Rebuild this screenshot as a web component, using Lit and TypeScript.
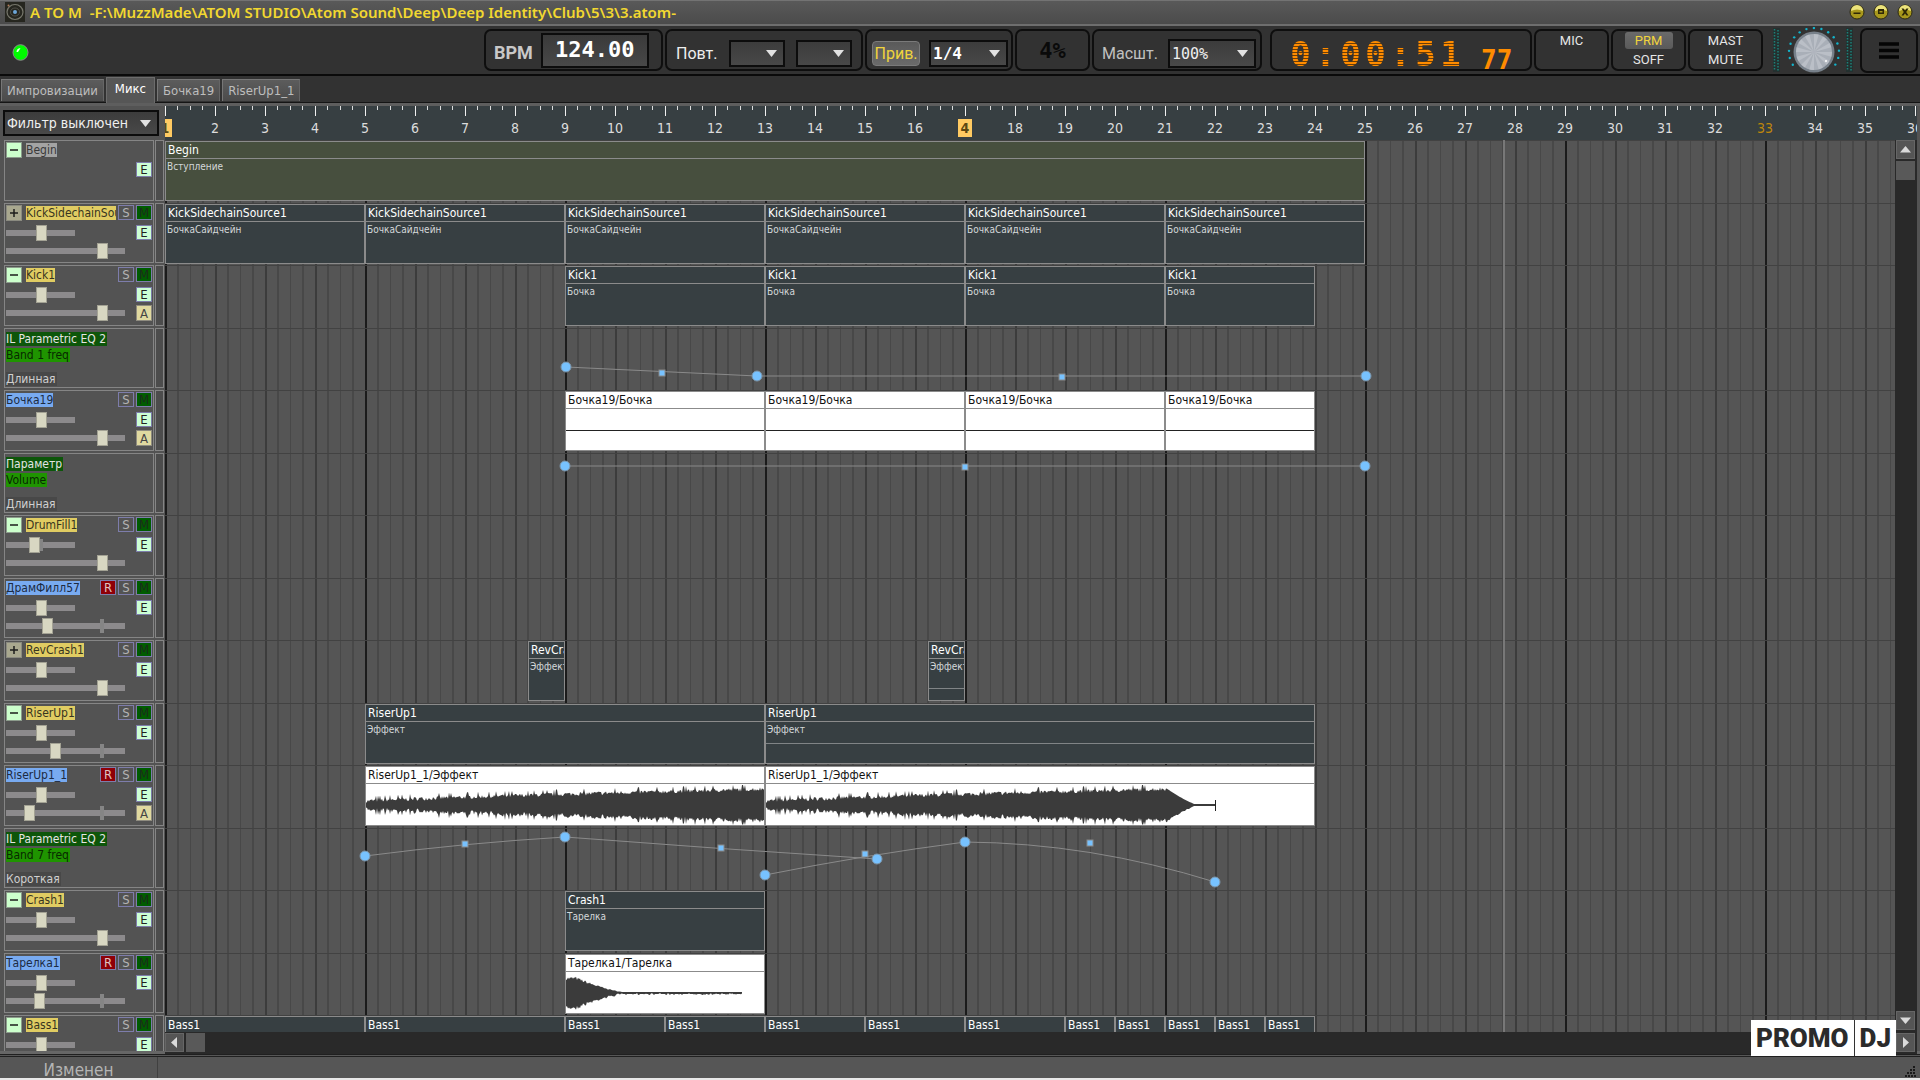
import { LitElement, html, css, svg, nothing } from "lit";
import { customElement, property } from "lit/decorators.js";
import { classMap } from "lit/directives/class-map.js";

const BAR = 50;
const LAST_BAR = 36;

type Tone = "olive" | "slate" | "white";

interface Clip {
  from: number;
  to: number;
  title: string;
  sub?: string;
  tone?: Tone;
  line?: number;
  wave?: "riser" | "tail" | "crash";
}

interface Curve {
  path: string;
  points: [number, number][];
  handles: [number, number][];
}

interface Track {
  kind: "group" | "audio" | "param";
  name: string;
  open?: boolean;
  rec?: boolean;
  auto?: boolean;
  pan?: number;
  vol?: number;
  param?: string;
  mode?: string;
  plain?: boolean;
  clips?: Clip[];
  curve?: Curve;
}

const run = (starts: number[], end: number, rest: Omit<Clip, "from" | "to">): Clip[] =>
  starts.map((from, i) => ({ from, to: starts[i + 1] ?? end, ...rest }));

const TRACKS: Track[] = [
  {
    kind: "group", name: "Begin", open: true, plain: true,
    clips: [{ from: 1, to: 25, title: "Begin", sub: "Вступление", tone: "olive" }],
  },
  {
    kind: "group", name: "KickSidechainSource1", vol: 91,
    clips: run([1, 5, 9, 13, 17, 21], 25, { title: "KickSidechainSource1", sub: "БочкаСайдчейн" }),
  },
  {
    kind: "group", name: "Kick1", open: true, auto: true, vol: 91,
    clips: run([9, 13, 17, 21], 24, { title: "Kick1", sub: "Бочка" }),
  },
  {
    kind: "param", name: "IL Parametric EQ 2", param: "Band 1 freq", mode: "Длинная",
    curve: {
      path: "M401 39 L592 48 H1201",
      points: [[401, 39], [592, 48], [1201, 48]],
      handles: [[497, 45], [897, 49]],
    },
  },
  {
    kind: "audio", name: "Бочка19", auto: true, vol: 91,
    clips: run([9, 13, 17, 21], 24, { title: "Бочка19/Бочка", tone: "white", line: 38 }),
  },
  {
    kind: "param", name: "Параметр", param: "Volume", mode: "Длинная",
    curve: {
      path: "M400 13 H1200",
      points: [[400, 13], [1200, 13]],
      handles: [[800, 14]],
    },
  },
  { kind: "group", name: "DrumFill1", open: true, pan: 23, vol: 91 },
  { kind: "audio", name: "ДрамФилл57", rec: true, vol: 36 },
  {
    kind: "group", name: "RevCrash1", vol: 91,
    clips: [
      { from: 8.25, to: 9, title: "RevCrash1", sub: "Эффект" },
      { from: 16.25, to: 17, title: "RevCrash1", sub: "Эффект", line: 46 },
    ],
  },
  {
    kind: "group", name: "RiserUp1", open: true, vol: 44,
    clips: [
      { from: 5, to: 13, title: "RiserUp1", sub: "Эффект" },
      { from: 13, to: 24, title: "RiserUp1", sub: "Эффект", line: 38 },
    ],
  },
  {
    kind: "audio", name: "RiserUp1_1", rec: true, auto: true, vol: 18,
    clips: [
      { from: 5, to: 13, title: "RiserUp1_1/Эффект", tone: "white", wave: "riser" },
      { from: 13, to: 24, title: "RiserUp1_1/Эффект", tone: "white", wave: "tail" },
    ],
  },
  {
    kind: "param", name: "IL Parametric EQ 2", param: "Band 7 freq", mode: "Короткая",
    curve: {
      path: "M200 28 Q300 15 400 9 Q556 21 712 31 M600 47 Q700 27 800 14 Q925 15 1050 54",
      points: [[200, 28], [400, 9], [712, 31], [600, 47], [800, 14], [1050, 54]],
      handles: [[300, 16], [556, 20], [700, 26], [925, 15]],
    },
  },
  {
    kind: "group", name: "Crash1", open: true, vol: 91,
    clips: [{ from: 9, to: 13, title: "Crash1", sub: "Тарелка" }],
  },
  {
    kind: "audio", name: "Тарелка1", rec: true, vol: 28,
    clips: [{ from: 9, to: 13, title: "Тарелка1/Тарелка", tone: "white", wave: "crash" }],
  },
  {
    kind: "group", name: "Bass1", open: true, vol: 91,
    clips: run([1, 5, 9, 11, 13, 15, 17, 19, 20, 21, 22, 23], 24, { title: "Bass1" }),
  },
];

/* Outline of a waveform, mirrored around y = 21. */
function wavePath(kind: "riser" | "tail" | "crash"): string {
  let seed = 7;
  const rnd = () => (seed = (seed * 16807) % 2147483647) / 2147483647;
  const mid = 21;
  const end = kind === "riser" ? 400 : kind === "tail" ? 449 : 176;
  const up: string[] = [];
  const down: string[] = [];
  for (let x = 0; x <= end; x += 1) {
    const r = rnd();
    const r2 = rnd();
    let a: number;
    if (kind === "crash") {
      a = x < 10 ? 15 : x < 60 ? 15 * Math.pow(1 - (x - 10) / 55, 1.5) : 1;
      a = Math.max(1, a * (0.85 + r * 0.25));
    } else {
      const t = Math.min(x, 400) / 400;
      a = 5 + 12 * Math.pow(t, 0.8);
      if (x > 400) a = x < 430 ? Math.max(1, 17 * Math.pow(1 - (x - 400) / 32, 1.3)) : 1;
      const spike = r > 0.9 ? 3 : 0;
      if (x <= 400) a = Math.min(20, a - 3 + r * 4 + spike);
    }
    const b = a > 1 ? Math.min(20, a - 1 + r2 * 2) : 1;
    up.push(`${x} ${(mid - a).toFixed(1)}`);
    down.unshift(`${x} ${(mid + b).toFixed(1)}`);
  }
  return `M${up.join("L")}L${down.join("L")}Z`;
}

const UI_FONT = css`"DejaVu Sans Condensed", "Noto Sans", sans-serif`;

@customElement("drop-down")
class DropDown extends LitElement {
  @property() label = "";
  @property() value = "";

  static styles = css`
    :host {
      display: grid;
      align-items: center;
      box-sizing: border-box;
      border: 2px solid #0c0c0c;
      background: linear-gradient(#3c3c3c, #484848);
    }
    .field {
      grid-area: 1 / 1;
      width: 100%;
      height: 100%;
      box-sizing: border-box;
      appearance: none;
      border: 0;
      padding: 0 20px 0 2px;
      background: transparent;
      color: inherit;
      font: inherit;
      outline: none;
    }
    .arrow {
      grid-area: 1 / 1;
      justify-self: end;
      margin-right: 6px;
      pointer-events: none;
    }
  `;

  render() {
    return html`
      <select class="field" aria-label=${this.label}>
        <option>${this.value}</option>
      </select>
      <svg class="arrow" width="11" height="7" viewBox="0 0 11 7" aria-hidden="true">
        <path d="M0 0H11L5.500 7Z" fill="#e2e2e2" />
      </svg>
    `;
  }
}

@customElement("track-panel")
class TrackPanel extends LitElement {
  @property({ attribute: false }) track!: Track;

  static styles = css`
    :host {
      display: flex;
      gap: 1px;
      padding-bottom: 2px;
      box-sizing: border-box;
      font: 12px/14px ${UI_FONT};
    }
    .box {
      display: flex;
      flex-direction: column;
      flex: 1;
      min-width: 0;
      box-sizing: border-box;
      padding: 1px 1px 0;
      border: 1px solid #858585;
      background: #535353;
    }
    .meter {
      width: 9px;
      box-sizing: border-box;
      border: 1px solid #858585;
      background: #4c4c4c;
    }
    .line {
      display: flex;
      align-items: flex-start;
      justify-content: flex-end;
      gap: 2px;
      height: 16px;
    }
    .head {
      margin-bottom: 4px;
    }
    .mid {
      margin-bottom: 2px;
    }
    .name {
      height: 14px;
      margin: 1px auto 0 0;
      overflow: hidden;
      white-space: nowrap;
      background: #e0cc62;
      color: #38351f;
    }
    .toggle + .name {
      margin-left: 2px;
    }
    .audio {
      background: #78aaf0;
      color: #1c2b42;
    }
    .toggle + .grey {
      background: #a3a3a3;
      color: #3a3a3a;
    }
    .btn {
      flex: none;
      width: 16px;
      height: 15px;
      box-sizing: border-box;
      padding: 0;
      border: 1px solid #7d7dab;
      background: #535353;
      color: #b4b4b4;
      font: 13px/13px ${UI_FONT};
      text-align: center;
    }
    .toggle {
      height: 16px;
      border-color: #8c9c8c;
      background: #ccffcc;
      display: grid;
      place-items: center;
    }
    .closed {
      background: #a9a88f;
      border-color: #8a8a80;
    }
    .mute {
      background: #005c00;
      color: #1c2c1c;
    }
    .rec {
      background: #8e0008;
      color: #e0c0c0;
    }
    .edit {
      background: #ccffd4;
      color: #222;
    }
    .auto {
      height: 16px;
      background: #e0d9a0;
      border-color: #8f8c80;
      color: #444;
    }
    .slider {
      flex: none;
      appearance: none;
      width: 119px;
      height: 16px;
      margin: 0 auto 0 0;
      background:
        linear-gradient(#858585, #858585) 94px 1px / 4px 14px no-repeat,
        linear-gradient(#8c8a8c, #8c8a8c) 0 5px / 100% 6px no-repeat;
    }
    .short {
      width: 69px;
      background:
        linear-gradient(#858585, #858585) 33px 2px / 4px 12px no-repeat,
        linear-gradient(#8c8a8c, #8c8a8c) 0 5px / 100% 6px no-repeat;
    }
    .slider::-webkit-slider-thumb {
      appearance: none;
      width: 11px;
      height: 16px;
      box-sizing: border-box;
      border: 1px solid #a3a294;
      background: #d8d7c2;
    }
    .params {
      display: flex;
      flex-direction: column;
      align-items: flex-start;
      padding: 2px 0 0;
      gap: 2px;
    }
    .plugin {
      background: #0d560a;
      color: #e4e4e4;
    }
    .value {
      background: #1f9400;
      color: #082a00;
    }
    .mode {
      margin-top: 8px;
      background: #484848;
      color: #d0d0d0;
    }
    .plugin,
    .value,
    .mode {
      white-space: nowrap;
      padding-right: 1px;
    }
  `;

  render() {
    const t = this.track;
    return html`
      <div class="box">${t.kind === "param" ? this.params(t) : this.controls(t)}</div>
      <div class="meter"></div>
    `;
  }

  private params(t: Track) {
    return html`<div class="params">
      <span class="plugin">${t.name}</span>
      <span class="value">${t.param}</span>
      <span class="mode">${t.mode}</span>
    </div>`;
  }

  private controls(t: Track) {
    return html`
      <div class="line head">
        ${t.kind === "group"
          ? html`<button class=${classMap({ btn: true, toggle: true, closed: !t.open })}
              aria-label=${t.open ? "Свернуть" : "Развернуть"}>
              <svg width="10" height="10" viewBox="0 0 10 10" aria-hidden="true">
                <path d=${t.open ? "M1 5H9" : "M1 5H9M5 1V9"} stroke="#1c1c1c" stroke-width="1.500" />
              </svg>
            </button>`
          : nothing}
        <span class=${classMap({ name: true, audio: t.kind === "audio", grey: !!t.plain })}>${t.name}</span>
        ${t.rec ? html`<button class="btn rec">R</button>` : nothing}
        ${t.plain ? nothing : html`<button class="btn">S</button><button class="btn mute">M</button>`}
      </div>
      <div class="line mid">
        ${t.plain
          ? nothing
          : html`<input class="slider short" type="range" aria-label="Панорама" min="0" max="58" .value=${String(t.pan ?? 30)} />`}
        <button class="btn edit">E</button>
      </div>
      <div class="line">
        ${t.plain
          ? nothing
          : html`<input class="slider" type="range" aria-label="Громкость" min="0" max="108" .value=${String(t.vol ?? 91)} />`}
        ${t.auto ? html`<button class="btn auto">A</button>` : nothing}
      </div>
    `;
  }
}

@customElement("track-lane")
class TrackLane extends LitElement {
  @property({ attribute: false }) track!: Track;

  static styles = css`
    :host {
      display: block;
      position: relative;
      box-sizing: border-box;
      border-top: 1px solid #424242;
      font: 12px/16px ${UI_FONT};
    }
    .clip {
      position: absolute;
      top: 0;
      height: 60px;
      box-sizing: border-box;
      overflow: hidden;
      border: 1px solid #8b8b8b;
      background: #373f42;
      color: #fff;
      white-space: nowrap;
    }
    .title {
      height: 16px;
      padding-left: 2px;
      border-bottom: 1px solid #8b8b8b;
    }
    .sub {
      padding-left: 1px;
      font-size: 10px;
      color: #d4d8da;
    }
    .olive {
      background: #474f3e;
    }
    .white {
      background: #fff;
      color: #111;
    }
    .rule {
      position: absolute;
      left: 0;
      right: 0;
      height: 1px;
      background: #808486;
    }
    .white .rule {
      background: #222;
    }
    .wave {
      display: block;
    }
    .curve {
      position: absolute;
      left: 0;
      top: -1px;
      overflow: visible;
    }
  `;

  render() {
    const t = this.track;
    return html`
      ${(t.clips ?? []).map((c) => {
        const left = Math.round((c.from - 1) * BAR);
        const right = Math.round((c.to - 1) * BAR);
        return html`<div class="clip ${c.tone ?? "slate"}" style="left:${left}px;width:${right - left}px">
          <div class="title">${c.title}</div>
          ${c.sub ? html`<div class="sub">${c.sub}</div>` : nothing}
          ${c.line ? html`<div class="rule" style="top:${c.line}px"></div>` : nothing}
          ${c.wave ? this.wave(c.wave) : nothing}
        </div>`;
      })}
      ${t.curve ? this.curve(t.curve) : nothing}
    `;
  }

  private wave(kind: "riser" | "tail" | "crash") {
    return html`<svg class="wave" width="460" height="42" viewBox="0 0 460 42" aria-hidden="true">
      <path d=${wavePath(kind)} fill="#3b3b3b" />
      ${kind === "tail" ? svg`<path d="M449.500 16V27" stroke="#222" />` : nothing}
    </svg>`;
  }

  private curve(c: Curve) {
    return html`<svg class="curve" width="1300" height="60" viewBox="0 0 1300 60" aria-hidden="true">
      <path d=${c.path} fill="none" stroke="#8a8a8a" />
      ${c.handles.map(([x, y]) => svg`<rect x=${x - 3} y=${y - 3} width="6" height="6" fill="#77c2ff" stroke="#8a8a8a" />`)}
      ${c.points.map(([x, y]) => svg`<circle cx=${x} cy=${y} r="5" fill="#77c2ff" stroke="#7c94a8" />`)}
    </svg>`;
  }
}

@customElement("app-root")
class AppRoot extends LitElement {
  static styles = css`
    :host {
      display: flex;
      flex-direction: column;
      height: 100vh;
      overflow: hidden;
      background: #535353;
      color: #ddd;
      font: 14px/18px ${UI_FONT};
    }
    button {
      font: inherit;
      color: inherit;
      cursor: default;
    }
    .titlebar {
      display: flex;
      align-items: center;
      gap: 5px;
      height: 26px;
      flex: none;
      box-sizing: border-box;
      padding: 0 7px 2px 5px;
      border-top: 1px solid #737373;
      border-bottom: 2px solid #6e6e6e;
      background: linear-gradient(#595959, #4b4b4b);
    }
    .title {
      flex: 1;
      margin: 0;
      font: 600 15px/20px "Noto Sans", "Open Sans", sans-serif;
      color: #f2d830;
      white-space: pre;
    }
    .winbtns {
      display: flex;
      gap: 8px;
    }
    .winbtn {
      width: 16px;
      height: 16px;
      padding: 0;
      border: 0;
      background: none;
      display: block;
    }
    .toolbar {
      display: flex;
      align-items: center;
      gap: 2px;
      height: 50px;
      flex: none;
      box-sizing: border-box;
      padding: 0 2px 0 12px;
      border-bottom: 2px solid #0a0a0a;
      background: #323232;
      font: 16px/20px Roboto, "Noto Sans", sans-serif;
    }
    .led {
      margin-right: auto;
    }
    .group {
      display: flex;
      align-items: center;
      height: 42px;
      box-sizing: border-box;
      border: 2px solid #0e0e0e;
      border-radius: 7px;
      background: #323232;
    }
    .bpm {
      width: 179px;
      gap: 8px;
      padding-left: 8px;
      font-size: 18px;
      font-weight: bold;
      color: #c8c8c8;
    }
    .bpm-label {
      padding-top: 5px;
    }
    .bpm-field {
      width: 108px;
      height: 35px;
      box-sizing: border-box;
      padding: 0 0 2px;
      border: 2px solid #0c0c0c;
      background: linear-gradient(#3a3a3a, #484848);
      color: #fff;
      font: bold 22px/29px "DejaVu Sans Mono", monospace;
      text-align: center;
      outline: none;
    }
    .loop {
      width: 198px;
      gap: 11px;
      padding: 7px 0 0 9px;
      color: #eee;
    }
    .pick {
      width: 56px;
      height: 27px;
    }
    .snap {
      width: 148px;
      gap: 9px;
      padding: 7px 0 0 5px;
    }
    .snapbtn {
      width: 48px;
      height: 25px;
      padding: 0;
      border: 1px solid #7a7a7a;
      border-radius: 4px;
      background: linear-gradient(#5a5a5a, #6a6a6a);
      color: #f0d43c;
    }
    .division {
      width: 79px;
      height: 27px;
      color: #fff;
      font: bold 16px/20px "DejaVu Sans Mono", monospace;
    }
    .load {
      width: 75px;
      justify-content: center;
      padding-top: 2px;
      color: #0a0a0a;
      font: bold 22px/26px "DejaVu Sans Mono", monospace;
    }
    .zoom {
      width: 170px;
      gap: 10px;
      padding: 7px 0 0 8px;
      color: #c0c0c0;
    }
    .zoomsel {
      width: 88px;
      height: 29px;
      color: #eee;
      font: 15px/20px "DejaVu Sans Mono", monospace;
    }
    .clock {
      width: 262px;
      margin-left: 6px;
      padding: 8px 0 0 16px;
      font: bold 34px/38px "DejaVu Sans Mono", monospace;
    }
    .digit {
      width: 25px;
      text-align: center;
      color: transparent;
      background: repeating-linear-gradient(#ff8c00 0 2px, #6a3d08 2px 3px);
      background-clip: text;
      -webkit-background-clip: text;
    }
    .hund {
      margin-left: 18px;
      padding-top: 11px;
      font-size: 26px;
      line-height: 24px;
      color: #ff8c00;
    }
    .modes {
      flex-direction: column;
      justify-content: flex-start;
      width: 75px;
      gap: 2px;
      padding-top: 1px;
      font-size: 13px;
      line-height: 17px;
      color: #e6e6e6;
    }
    .mode {
      width: 48px;
      height: 17px;
      padding: 0;
      border: 0;
      border-radius: 3px;
      background: none;
    }
    .on {
      background: linear-gradient(#6a6a6a, #5a5a5a);
      color: #f0d43c;
    }
    .knob {
      margin: 0 4px 0 7px;
    }
    .menu {
      width: 58px;
      height: 45px;
      padding: 0;
      justify-content: center;
    }
    .tabs {
      display: flex;
      align-items: flex-end;
      gap: 2px;
      height: 27px;
      flex: none;
      box-sizing: border-box;
      padding: 0 1px 1px;
      background: #323232;
      border-bottom: 1px solid #151515;
      font-size: 13px;
    }
    .tab {
      height: 22px;
      padding: 0 5px;
      border: 1px solid #777;
      border-right-color: #666;
      border-bottom: 0;
      background: linear-gradient(#5c5c5c, #4b4b4b);
      color: #bdbdbd;
    }
    .active {
      height: 26px;
      padding: 0 8px 4px;
      margin-bottom: -2px;
      border: 1px solid #6c6c6c;
      border-bottom: 0;
      background: #565656;
      color: #fff;
    }
    .main {
      display: grid;
      grid-template-columns: 165px 1fr 3px;
      grid-template-rows: 34px 1fr;
      flex: 1;
      min-height: 0;
      border-top: 3px solid #5e5e5e;
    }
    .corner {
      padding: 4px 6px 4px 3px;
    }
    .filter {
      height: 26px;
      color: #f0f0f0;
    }
    .ruler {
      grid-column: 2 / 3;
      overflow: hidden;
      background:
        linear-gradient(90deg, #f0f0f0 1px, transparent 1px) 0 0 / 50px 10px repeat-x,
        linear-gradient(90deg, transparent 12px, #ddd 12px 13px, transparent 13px 25px, #ddd 25px 26px, transparent 26px 37px, #ddd 37px 38px, transparent 38px) 0 0 / 50px 4px repeat-x,
        #373f42;
    }
    .numbers {
      display: flex;
      margin-left: -25px;
      padding-top: 13px;
    }
    .num {
      flex: none;
      width: 50px;
      text-align: center;
      color: #dcdcdc;
    }
    .mark {
      display: inline-block;
      width: 14px;
      height: 18px;
      background: #ffca62;
      color: #5c4712;
      font-weight: bold;
    }
    .gold {
      color: #bd860c;
    }
    .heads {
      grid-column: 1 / 2;
      overflow: hidden;
      padding: 0 1px 0 4px;
    }
    .rowbox {
      height: 62px;
    }
    .rowbox:nth-child(odd) {
      height: 63px;
    }
    .arrange {
      grid-column: 2 / 3;
      display: grid;
      grid-template-columns: 1fr 22px;
      grid-template-rows: 1fr 22px;
      min-height: 0;
      min-width: 0;
      position: relative;
    }
    .lanes {
      position: relative;
      overflow: hidden;
      background:
        linear-gradient(90deg, #1b1b1b 2px, transparent 2px) 0 0 / 200px 100%,
        linear-gradient(90deg, #3c3c3c 2px, transparent 2px) 0 0 / 50px 100%,
        linear-gradient(90deg, transparent 12px, #484848 12px 14px, transparent 14px 25px, #484848 25px 26px, transparent 26px 37px, #484848 37px 39px, transparent 39px) 0 0 / 50px 100%,
        #555;
    }
    .cursor {
      position: absolute;
      top: 0;
      bottom: 0;
      width: 2px;
      background: #787878;
    }
    .scroll {
      display: flex;
      gap: 2px;
      background: #292929;
    }
    .vert {
      flex-direction: column;
      padding: 0 2px 2px 1px;
    }
    .horz {
      grid-column: 1 / 3;
      padding: 1px 2px 1px 0;
    }
    .sbtn {
      flex: none;
      display: grid;
      place-items: center;
      width: 19px;
      height: 19px;
      padding: 0;
      border: 1px solid #666;
      background: #555;
    }
    .thumb {
      flex: none;
      width: 19px;
      height: 19px;
      background: #595959;
    }
    .grow {
      flex: 1;
    }
    .brand {
      position: absolute;
      right: 21px;
      bottom: -2px;
      display: flex;
      gap: 1px;
      height: 36px;
      background: #333;
      color: #2b2b2b;
      font: 900 26px/36px Roboto, "Liberation Sans", sans-serif;
    }
    .word {
      padding: 0 5px;
      background: #fff;
    }
    .status {
      display: flex;
      flex: none;
      height: 26px;
      box-sizing: border-box;
      overflow: hidden;
      border-top: 3px double #202020;
      border-bottom: 2px solid #e8e8e8;
      background: #565656;
      box-shadow: 0 -3px 0 #666;
      color: #b4b4b4;
      font-size: 17px;
      line-height: 27px;
    }
    .state {
      width: 158px;
      box-sizing: border-box;
      text-align: center;
      border-right: 1px solid #404040;
    }
    .grip {
      margin: 9px 4px 0 auto;
    }
  `;

  render() {
    return html`
      ${this.titlebar()} ${this.toolbar()}
      <nav class="tabs">
        <button class="tab">Импровизации</button>
        <button class="tab active">Микс</button>
        <button class="tab">Бочка19</button>
        <button class="tab">RiserUp1_1</button>
      </nav>
      <main class="main">
        <div class="corner"><drop-down class="filter" label="Фильтр" value="Фильтр выключен"></drop-down></div>
        <div class="ruler"><div class="numbers">${this.numbers()}</div></div>
        <div class="heads">
          ${TRACKS.map((t) => html`<track-panel class="rowbox" .track=${t}></track-panel>`)}
        </div>
        ${this.arrange()}
      </main>
      <footer class="status">
        <span class="state">Изменен</span>
        <svg class="grip" width="11" height="11" viewBox="0 0 11 11" aria-hidden="true">
          <path d="M8 0h2v2h-2zM5 3h2v2h-2zM8 3h2v2h-2zM2 6h2v2h-2zM5 6h2v2h-2zM8 6h2v2h-2zM0 9h2v2h-2zM3 9h2v2h-2zM6 9h2v2h-2zM9 9h2v2h-2z" fill="#1a1a1a" />
        </svg>
      </footer>
    `;
  }

  private titlebar() {
    const glyphs: [string, string][] = [
      ["Свернуть", "M4.500 8.500H11.500V10H4.500Z"],
      ["Развернуть", "M5 5H11V10H5ZM6.500 7V8.500H9.500V7Z"],
      ["Закрыть", "M4.500 4.500H6.500L8 6.500L9.500 4.500H11.500L9.200 8L11.500 11.500H9.500L8 9.500L6.500 11.500H4.500L6.800 8Z"],
    ];
    return html`<header class="titlebar">
      <svg width="20" height="20" viewBox="0 0 20 20" aria-hidden="true">
        <rect width="20" height="20" fill="#26261f" />
        <ellipse cx="10" cy="10" rx="8" ry="7.500" fill="none" stroke="#77776c" stroke-width="1.200" />
        <ellipse cx="10" cy="10" rx="4.500" ry="4" fill="none" stroke="#504f48" />
        <circle cx="10" cy="10" r="2" fill="#6da6d8" />
        <circle cx="3.500" cy="3.500" r="1" fill="#b07a5a" />
      </svg>
      <h1 class="title">A TO M  -F:\\MuzzMade\\ATOM STUDIO\\Atom Sound\\Deep\\Deep Identity\\Club\\5\\3\\3.atom-</h1>
      <div class="winbtns">
        ${glyphs.map(
          ([label, d]) => html`<button class="winbtn" aria-label=${label}>
            <svg width="16" height="16" viewBox="0 0 16 16" aria-hidden="true">
              <circle cx="8" cy="8" r="7" fill="#a8981c" stroke="#2c2a14" />
              <path d="M2 7A6 6 0 0 1 14 7Q8 4 2 7Z" fill="#ece37c" />
              <path d=${d} fill="#2e2806" fill-rule="evenodd" />
            </svg>
          </button>`,
        )}
      </div>
    </header>`;
  }

  private toolbar() {
    return html`<div class="toolbar">
      <svg class="led" width="17" height="21" viewBox="0 0 17 21" aria-hidden="true">
        <ellipse cx="8.500" cy="12.500" rx="7.500" ry="7.800" fill="#00fb00" stroke="#8a8a8a" />
        <path d="M4.500 12Q4.500 8.500 8.500 8L6 12Z" fill="#eaffea" />
      </svg>
      <div class="group bpm">
        <label class="bpm-label" for="bpm">BPM</label>
        <input id="bpm" class="bpm-field" value="124.00" />
      </div>
      <div class="group loop">
        <span>Повт.</span>
        <drop-down class="pick" label="Повтор от"></drop-down>
        <drop-down class="pick" label="Повтор до"></drop-down>
      </div>
      <div class="group snap">
        <button class="snapbtn">Прив.</button>
        <drop-down class="division" label="Привязка" value="1/4"></drop-down>
      </div>
      <div class="group load">4%</div>
      <div class="group zoom">
        <span>Масшт.</span>
        <drop-down class="zoomsel" label="Масштаб" value="100%"></drop-down>
      </div>
      <div class="group clock">
        ${[..."0:00:51"].map((d) => html`<span class="digit">${d}</span>`)}
        <span class="hund">77</span>
      </div>
      <div class="group modes"><button class="mode">MIC</button></div>
      <div class="group modes"><button class="mode on">PRM</button><button class="mode">SOFF</button></div>
      <div class="group modes"><button class="mode">MAST</button><button class="mode">MUTE</button></div>
      ${this.knob()}
      <button class="group menu" aria-label="Меню">
        <svg width="20" height="17" viewBox="0 0 20 17" aria-hidden="true">
          <path d="M0 2H20M0 8.500H20M0 15H20" stroke="#050505" stroke-width="3.600" />
        </svg>
      </button>
    </div>`;
  }

  private knob() {
    const dots = Array.from({ length: 15 }, (_, i) => {
      const a = ((148 + i * 17.4) * Math.PI) / 180;
      return [42 + 25 * Math.cos(a), 25 + 24 * Math.sin(a)];
    });
    const wedges = Array.from({ length: 12 }, (_, i) => {
      const a = (i * Math.PI) / 6;
      const b = a + Math.PI / 12;
      return `M42 25L${42 + 18 * Math.cos(a)} ${25 + 18 * Math.sin(a)}A18 18 0 0 1 ${42 + 18 * Math.cos(b)} ${25 + 18 * Math.sin(b)}Z`;
    });
    return html`<svg class="knob" width="82" height="46" viewBox="0 0 82 46" aria-hidden="true">
      ${[4, 77].map(
        (x) => svg`<rect x=${x - 3} y="1" width="7" height="44" fill="#24302f" />
          <path d="M${x - 1.5} 2V44M${x + 2} 3V44" stroke="#1d8079" stroke-width="1.500" stroke-dasharray="1.500 1.500" />`,
      )}
      ${dots.map(([x, y]) => svg`<circle cx=${x} cy=${y} r="1.200" fill="#12b4cc" />`)}
      <circle cx="42" cy="25" r="20.500" fill="#77808a" />
      <circle cx="42" cy="25" r="18" fill="#a9afb8" />
      ${wedges.map((d) => svg`<path d=${d} fill="#c6cad0" opacity="0.600" />`)}
      <circle cx="54" cy="34" r="1" fill="#fff" />
    </svg>`;
  }

  private numbers() {
    return Array.from({ length: LAST_BAR }, (_, i) => {
      const n = i + 1;
      if (n === 1) return html`<span class="num"><span class="mark">1</span></span>`;
      if (n === 17) return html`<span class="num"><span class="mark">4</span></span>`;
      return html`<span class=${classMap({ num: true, gold: n === 33 })}>${n}</span>`;
    });
  }

  private arrow(label: string, d: string) {
    return html`<button class="sbtn" aria-label=${label}>
      <svg width="11" height="11" viewBox="0 0 11 11" aria-hidden="true"><path d=${d} fill="#dadada" /></svg>
    </button>`;
  }

  private arrange() {
    return html`<div class="arrange">
      <div class="lanes">
        ${TRACKS.map((t) => html`<track-lane class="rowbox" .track=${t}></track-lane>`)}
        <div class="cursor" style="left:${Math.round(26.75 * BAR)}px"></div>
      </div>
      <div class="scroll vert">
        ${this.arrow("Вверх", "M0 8.500L5.500 2L11 8.500Z")}
        <div class="thumb"></div>
        <div class="grow"></div>
        ${this.arrow("Вниз", "M0 2.500H11L5.500 9Z")}
      </div>
      <div class="scroll horz">
        ${this.arrow("Влево", "M8 0V11L2 5.500Z")}
        <div class="thumb"></div>
        <div class="grow"></div>
        ${this.arrow("Вправо", "M3 0V11L9 5.500Z")}
      </div>
      <div class="brand"><span class="word">PROMO</span><span class="word">DJ</span></div>
    </div>`;
  }
}
